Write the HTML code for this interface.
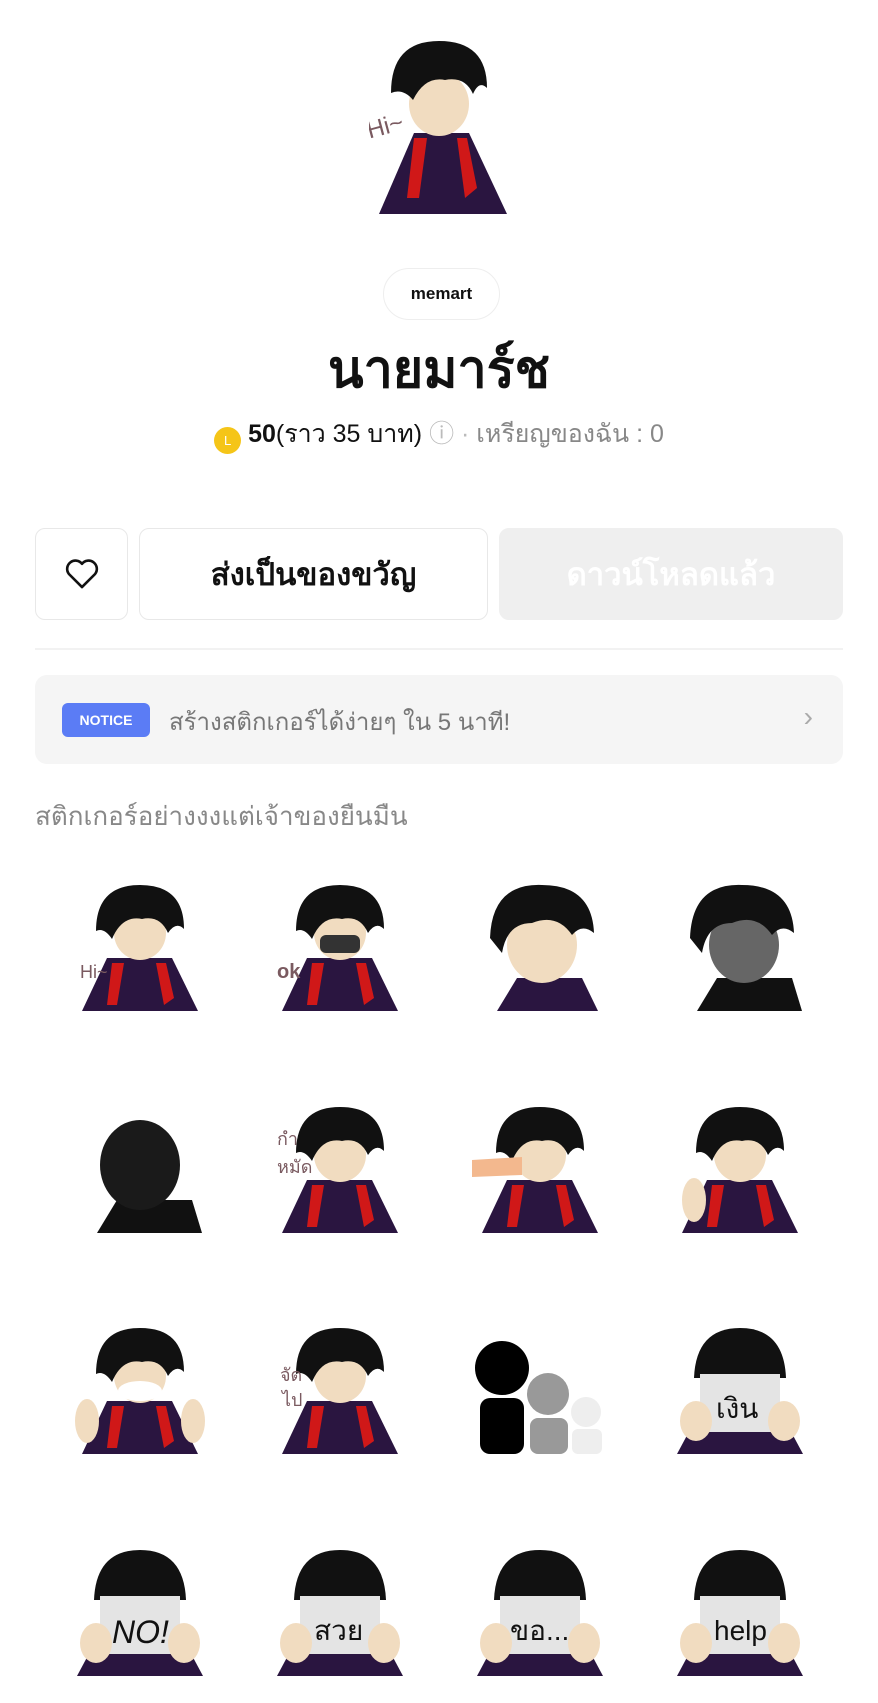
<!DOCTYPE html>
<html><head><meta charset="utf-8"><style>
*{margin:0;padding:0;box-sizing:border-box}
body{width:878px;height:1703px;background:#fff;font-family:"Liberation Sans","Noto Sans CJK SC",sans-serif;position:relative;overflow:hidden;color:#111}
.abs{position:absolute}
.pill{left:383px;top:268px;width:117px;height:52px;border:1px solid #eee;border-radius:26px;font-size:17px;font-weight:bold;text-align:center;line-height:50px}
.title{left:0;width:878px;top:327px;text-align:center;font-size:52px;font-weight:bold}
.price{left:0;width:878px;top:414px;text-align:center;font-size:25px;color:#111}
.btn{top:528px;height:92px;border:1px solid #e8e8e8;border-radius:10px;display:flex;align-items:center;justify-content:center;font-size:31px;font-weight:bold}
.st{position:absolute;width:136px;height:130px}
</style></head><body>
<svg class="abs" style="left:369px;top:38px" width="140" height="178" viewBox="0 0 140 178">
<path d="M10 176 L45 95 L100 95 L138 176Z" fill="#2a1540"/>
<path d="M45 100 L38 160 L50 160 L58 100Z M88 100 L96 160 L108 150 L98 100Z" fill="#d01818"/>
<ellipse cx="70" cy="66" rx="30" ry="32" fill="#f1dcc0"/>
<path d="M22 55 Q22 3 70 3 Q118 3 118 50 Q110 42 104 56 Q96 38 76 42 Q56 38 44 62 Q34 50 22 55Z" fill="#111"/>
<text x="0" y="98" font-size="24" fill="#7a5a60" transform="rotate(-15 10 98)">Hi~</text>
</svg>
<div class="abs pill">memart</div>
<div class="abs title">นายมาร์ช</div>
<div class="abs price"><span style="display:inline-block;width:27px;height:27px;border-radius:50%;background:#f5c518;color:#fff;font-size:13px;line-height:27px;vertical-align:-3px">L</span> <b>50</b>(ราว 35 บาท)<span style="color:#bbb"> ⓘ ·</span> <span style="color:#888">เหรียญของฉัน : 0</span></div>
<div class="abs btn" style="left:35px;width:93px"><svg width="36" height="32" viewBox="0 0 24 22"><path d="M12 20 L3 11 A5 5 0 0 1 12 4 A5 5 0 0 1 21 11Z" fill="none" stroke="#111" stroke-width="1.8" stroke-linejoin="round"/></svg></div>
<div class="abs btn" style="left:139px;width:349px">ส่งเป็นของขวัญ</div>
<div class="abs btn" style="left:499px;width:344px;background:#efefef;border-color:#efefef;color:#fff">ดาวน์โหลดแล้ว</div>
<div class="abs" style="left:35px;top:648px;width:808px;height:2px;background:#f2f2f2"></div>
<div class="abs" style="left:35px;top:675px;width:808px;height:89px;background:#f5f5f5;border-radius:12px">
<div class="abs" style="left:27px;top:28px;width:88px;height:34px;background:#5b7cf5;border-radius:6px;color:#fff;font-size:14px;font-weight:bold;text-align:center;line-height:34px">NOTICE</div>
<div class="abs" style="left:134px;top:27px;font-size:24px;color:#777">สร้างสติกเกอร์ได้ง่ายๆ ใน 5 นาที!</div>
<div class="abs" style="right:30px;top:26px;font-size:28px;color:#aaa">›</div>
</div>
<div class="abs" style="left:35px;top:796px;font-size:26px;color:#888">สติกเกอร์อย่างงงแต่เจ้าของยืนมืน</div>
<svg width="0" height="0" style="position:absolute"><defs>
<g id="boy"><path d="M10 128 L35 75 L100 75 L126 128Z" fill="#2a1540"/>
<path d="M40 80 L35 122 L45 122 L52 80Z M84 80 L92 122 L102 115 L94 80Z" fill="#d01818"/>
<ellipse cx="68" cy="50" rx="26" ry="27" fill="#f1dcc0"/>
<path d="M24 48 Q24 2 68 2 Q112 2 112 46 Q104 38 96 50 Q88 32 70 36 Q50 32 40 56 Q32 44 24 48Z" fill="#111"/></g>
<g id="sign"><path d="M5 128 L20 100 L116 100 L131 128Z" fill="#2a1540"/>
<path d="M22 52 Q24 2 68 2 Q112 2 114 52Z" fill="#111"/>
<rect x="28" y="48" width="80" height="58" fill="#e4e4e4"/>
<ellipse cx="24" cy="95" rx="16" ry="20" fill="#f1dcc0"/><ellipse cx="112" cy="95" rx="16" ry="20" fill="#f1dcc0"/></g>
</defs></svg>
<svg class="st" style="left:72px;top:883px" viewBox="0 0 136 130"><use href="#boy"/><text x="8" y="95" font-size="18" fill="#7a5a60">Hi~</text></svg>
<svg class="st" style="left:272px;top:883px" viewBox="0 0 136 130"><use href="#boy"/><rect x="48" y="52" width="40" height="18" rx="6" fill="#333"/><text x="5" y="95" font-size="20" font-weight="bold" fill="#7a5a60">ok</text></svg>
<svg class="st" style="left:472px;top:883px" viewBox="0 0 136 130"><path d="M25 128 L45 95 L110 95 L126 128Z" fill="#2a1540"/><ellipse cx="70" cy="62" rx="35" ry="38" fill="#f1dcc0"/><path d="M18 55 Q20 0 70 2 Q120 2 122 50 Q110 40 100 52 Q85 30 60 40 Q35 40 30 70Z" fill="#111"/></svg>
<svg class="st" style="left:672px;top:883px" viewBox="0 0 136 130"><path d="M25 128 L45 95 L120 95 L130 128Z" fill="#111"/><ellipse cx="72" cy="62" rx="35" ry="38" fill="#666"/><path d="M18 55 Q20 0 70 2 Q120 2 122 50 Q110 40 100 52 Q85 30 60 40 Q35 40 30 70Z" fill="#111"/></svg>
<svg class="st" style="left:72px;top:1105px" viewBox="0 0 136 130"><path d="M25 128 L45 95 L120 95 L130 128Z" fill="#111"/><ellipse cx="68" cy="60" rx="40" ry="45" fill="#1a1a1a"/></svg>
<svg class="st" style="left:272px;top:1105px" viewBox="0 0 136 130"><use href="#boy"/><text x="5" y="40" font-size="18" fill="#7a5a60">กำ</text><text x="5" y="68" font-size="18" fill="#7a5a60">หมัด</text></svg>
<svg class="st" style="left:472px;top:1105px" viewBox="0 0 136 130"><use href="#boy"/><path d="M0 55 L50 52 L50 70 L0 72Z" fill="#f3b88e"/></svg>
<svg class="st" style="left:672px;top:1105px" viewBox="0 0 136 130"><use href="#boy"/><ellipse cx="22" cy="95" rx="12" ry="22" fill="#f1dcc0"/></svg>
<svg class="st" style="left:72px;top:1326px" viewBox="0 0 136 130"><use href="#boy"/><ellipse cx="68" cy="65" rx="22" ry="10" fill="#fff"/><ellipse cx="15" cy="95" rx="12" ry="22" fill="#f1dcc0"/><ellipse cx="121" cy="95" rx="12" ry="22" fill="#f1dcc0"/></svg>
<svg class="st" style="left:272px;top:1326px" viewBox="0 0 136 130"><use href="#boy"/><text x="8" y="55" font-size="18" fill="#7a5a60">จัด</text><text x="10" y="80" font-size="18" fill="#7a5a60">ไป</text></svg>
<svg class="st" style="left:472px;top:1326px" viewBox="0 0 136 130"><circle cx="30" cy="42" r="27" fill="#000"/><rect x="8" y="72" width="44" height="56" rx="10" fill="#000"/><circle cx="76" cy="68" r="21" fill="#999"/><rect x="58" y="92" width="38" height="36" rx="8" fill="#999"/><circle cx="114" cy="86" r="15" fill="#eee"/><rect x="100" y="103" width="30" height="25" rx="6" fill="#eee"/></svg>
<svg class="st" style="left:672px;top:1326px" viewBox="0 0 136 130"><use href="#sign"/><text x="44" y="92" font-size="28" fill="#111">เงิน</text></svg>
<svg class="st" style="left:72px;top:1548px" viewBox="0 0 136 130"><use href="#sign"/><text x="40" y="95" font-size="32" fill="#111" font-style="italic">NO!</text></svg>
<svg class="st" style="left:272px;top:1548px" viewBox="0 0 136 130"><use href="#sign"/><text x="42" y="92" font-size="28" fill="#111">สวย</text></svg>
<svg class="st" style="left:472px;top:1548px" viewBox="0 0 136 130"><use href="#sign"/><text x="38" y="92" font-size="28" fill="#111">ขอ...</text></svg>
<svg class="st" style="left:672px;top:1548px" viewBox="0 0 136 130"><use href="#sign"/><text x="42" y="92" font-size="28" fill="#111">help</text></svg>
</body></html>
